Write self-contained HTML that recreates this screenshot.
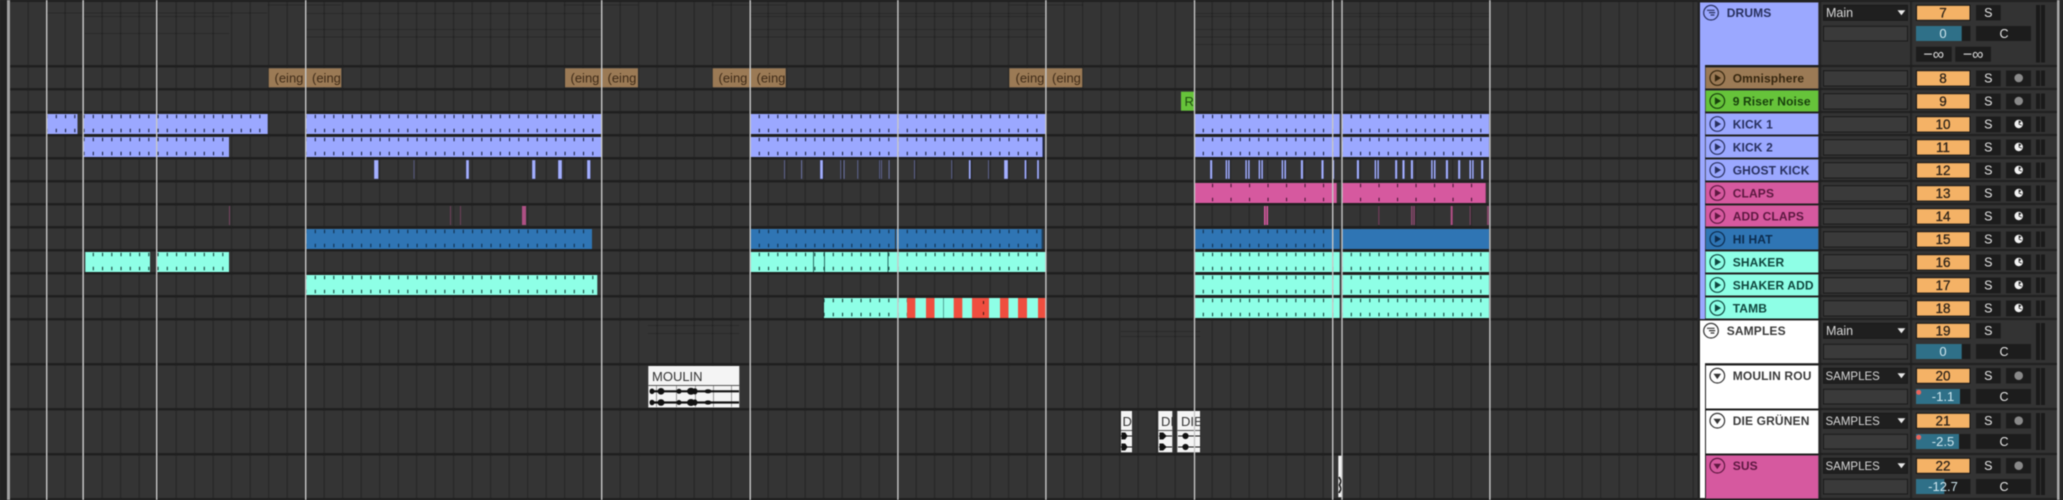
<!DOCTYPE html>
<html><head><meta charset="utf-8"><title>Arrangement</title>
<style>
html,body{margin:0;padding:0;background:#2f2f2f;width:2063px;height:500px;overflow:hidden}
svg{display:block;font-family:"Liberation Sans",sans-serif;filter:blur(.45px)}
.n{font-size:12px;font-weight:700;letter-spacing:.15px}
.c{font-size:11.5px;fill:#d8d8d8}
.o{font-size:13.5px;fill:#2a2118;text-anchor:middle;stroke:#2a2118;stroke-width:.25}
.s{font-size:12.5px;fill:#e4e4e4;text-anchor:middle}
.v{font-size:13px;fill:#cfe6ee;text-anchor:middle}
.cl{font-size:13px;fill:#3f2b18}
</style></head><body>
<svg width="2063" height="500" viewBox="0 0 2063 500" xmlns="http://www.w3.org/2000/svg">
<defs>
<clipPath id="k1"><rect x="47" y="114" width="30.5" height="20"/><rect x="83" y="114" width="184.7" height="20"/><rect x="305.5" y="114" width="296" height="20"/><rect x="750" y="114" width="295.5" height="20"/><rect x="1194" y="114" width="145.7" height="20"/><rect x="1342.5" y="114" width="146.5" height="20"/></clipPath>
<clipPath id="k2"><rect x="83" y="137" width="146" height="20"/><rect x="305.5" y="137" width="296" height="20"/><rect x="750" y="137" width="292.5" height="20"/><rect x="1194" y="137" width="145.7" height="20"/><rect x="1342.5" y="137" width="146.5" height="20"/></clipPath>
<clipPath id="cl"><rect x="1194" y="183" width="142.7" height="20"/><rect x="1342.5" y="183" width="143.2" height="20"/></clipPath>
<clipPath id="hh"><rect x="305.5" y="229" width="286.5" height="20"/><rect x="750" y="229" width="291.7" height="20"/><rect x="1194" y="229" width="145.7" height="20"/></clipPath>
<clipPath id="sh"><rect x="85.3" y="252" width="64.7" height="20"/><rect x="156.7" y="252" width="72.3" height="20"/><rect x="750" y="252" width="295.5" height="20"/><rect x="1194" y="252" width="145.7" height="20"/><rect x="1342.5" y="252" width="146.5" height="20"/></clipPath>
<clipPath id="sa"><rect x="305.5" y="275" width="291.8" height="20"/><rect x="1194" y="275" width="145.7" height="20"/><rect x="1342.5" y="275" width="146.5" height="20"/></clipPath>
<clipPath id="tb"><rect x="824" y="298" width="83" height="20"/><rect x="1194" y="298" width="145.7" height="20"/><rect x="1342.5" y="298" width="146.5" height="20"/></clipPath>
<g id="play" fill="none"><circle r="7.3" stroke="currentColor" stroke-width="1.2"/><path d="M-2.4-3.8 3.8 0-2.4 3.8Z" fill="currentColor" stroke="none"/></g>
<g id="down" fill="none"><circle r="7.3" stroke="currentColor" stroke-width="1.2"/><path d="M-3.8-2 3.8-2 0 3.4Z" fill="currentColor" stroke="none"/></g>
<g id="grp" fill="none" stroke="currentColor" stroke-width="1.2"><circle r="7.3"/><path d="M-4-2.4H3.6M-2-.1H4.2M-.4 2.3H3.4"/></g>
<g id="mon"><circle r="4.2" fill="#f2f2f2"/><path d="M0 0V-3.4A3.4 3.4 0 0 1 2.6-2.2Z" fill="#1d1d1d"/><path d="M0 0 3 1.2" stroke="#1d1d1d" stroke-width=".8"/></g>
<g id="rec"><circle r="4.3" fill="#8a8a8a"/></g>
<g id="trk">
<rect x="1823.5" y="3.7" width="84" height="15.4" fill="#3a3a3a" stroke="#1a1a1a"/>
<rect x="1916.5" y="3.7" width="53.5" height="15.4" fill="#f4b266" stroke="#141414"/>
<rect x="1976" y="3.5" width="24.7" height="15.8" fill="#1c1c1c"/>
<rect x="2006" y="3.5" width="25" height="15.8" fill="#1c1c1c"/>
<rect x="2036" y="3.5" width="4" height="15.5" fill="#1a1a1a"/><rect x="2041" y="3.5" width="4" height="15.5" fill="#1a1a1a"/>
</g>
<g id="bus">
<rect x="1823.5" y="3.3" width="84" height="15" fill="#1f1f1f" stroke="#1a1a1a"/>
<path d="M1897.5 8.2H1905.3L1901.4 13.2Z" fill="#e8e8e8"/>
<rect x="1823.5" y="24.3" width="84" height="14.7" fill="#3a3a3a" stroke="#1a1a1a"/>
<rect x="1916.5" y="3.3" width="53.5" height="15" fill="#f4b266" stroke="#141414"/>
<rect x="1976" y="3" width="24.7" height="15.5" fill="#1c1c1c"/>
<rect x="1916" y="24" width="54.5" height="15" fill="#1c1c1c"/>
<rect x="1976" y="24" width="55" height="15" fill="#1c1c1c"/>
<rect x="2036" y="3" width="4" height="37" fill="#1a1a1a"/><rect x="2041" y="3" width="4" height="37" fill="#1a1a1a"/>
</g>
</defs>

<!-- base -->
<rect width="2063" height="500" fill="#343434"/>
<!-- vertical grid -->
<line x1="9" y1="250" x2="1698" y2="250" stroke="#272727" stroke-width="500" stroke-dasharray="1.2 17.3"/>
<!-- group overview ghosts -->
<g fill="#000" opacity=".2">
<rect x="47" y="12.5" width="220" height="1"/><rect x="83" y="16" width="146" height="1"/><rect x="85" y="33" width="144" height="1"/>
<rect x="268" y="4.5" width="73" height="1"/><rect x="305" y="29" width="296" height="1"/><rect x="305" y="36.5" width="296" height="1"/><rect x="305" y="13" width="296" height="1"/>
<rect x="564" y="4.5" width="74" height="1"/><rect x="712" y="4.5" width="74" height="1"/><rect x="1009" y="4.5" width="74" height="1"/>
<rect x="750" y="13" width="296" height="1"/><rect x="750" y="16" width="296" height="1"/><rect x="750" y="29" width="296" height="1"/><rect x="750" y="36.5" width="296" height="1"/>
<rect x="1194" y="13" width="295" height="1"/><rect x="1194" y="16" width="295" height="1"/><rect x="1194" y="29" width="295" height="1"/><rect x="1194" y="36.5" width="295" height="1"/><rect x="1194" y="44" width="295" height="1"/>
<rect x="648" y="325" width="91" height="1"/><rect x="648" y="333" width="91" height="1"/><rect x="1121" y="331" width="79" height="1"/><rect x="1121" y="336" width="79" height="1"/>
</g>
<!-- row separators -->
<g fill="#1f1f1f">
<rect x="10" y="0" width="1688" height="2"/><rect x="10" y="65" width="1688" height="2.5"/><rect x="10" y="88" width="1688" height="2.5"/><rect x="10" y="111" width="1688" height="2.5"/><rect x="10" y="134" width="1688" height="2.5"/><rect x="10" y="157" width="1688" height="2.5"/><rect x="10" y="180" width="1688" height="2.5"/><rect x="10" y="203" width="1688" height="2.5"/><rect x="10" y="226" width="1688" height="2.5"/><rect x="10" y="249" width="1688" height="2.5"/><rect x="10" y="272" width="1688" height="2.5"/><rect x="10" y="295" width="1688" height="2.5"/><rect x="10" y="318" width="1688" height="2.5"/><rect x="10" y="363" width="1688" height="2.5"/><rect x="10" y="408" width="1688" height="2.5"/><rect x="10" y="453" width="1688" height="2.5"/><rect x="10" y="498" width="1688" height="2"/>
</g>
<!-- left edge -->
<rect x="0" y="0" width="7" height="500" fill="#222"/>
<rect x="7" y="0" width="3" height="500" fill="#a0a0a0"/>

<!-- brown clips -->
<g fill="#9b7a55">
<rect x="268.7" y="68.3" width="72.6" height="19"/><rect x="565" y="68.3" width="73" height="19"/><rect x="712.7" y="68.3" width="73" height="19"/><rect x="1009.3" y="68.3" width="73" height="19"/>
</g>
<text class="cl" x="274.5" y="82.5">(eing</text><text class="cl" x="312" y="82.5">(eing</text>
<text class="cl" x="570.5" y="82.5">(eing</text><text class="cl" x="607.5" y="82.5">(eing</text>
<text class="cl" x="718.5" y="82.5">(eing</text><text class="cl" x="756.5" y="82.5">(eing</text>
<text class="cl" x="1015.5" y="82.5">(eing</text><text class="cl" x="1052" y="82.5">(eing</text>
<!-- riser -->
<rect x="1181" y="91.7" width="13" height="19" fill="#66c33a"/>
<text x="1184.5" y="106" font-size="13" fill="#1f4d10">Ri</text>

<!-- kick 1 / kick 2 -->
<g fill="#9ba8ff">
<rect x="47" y="114" width="30.5" height="20"/><rect x="83" y="114" width="184.7" height="20"/><rect x="305.5" y="114" width="296" height="20"/><rect x="750" y="114" width="295.5" height="20"/><rect x="1194" y="114" width="145.7" height="20"/><rect x="1342.5" y="114" width="146.5" height="20"/>
<rect x="83" y="137" width="146" height="20"/><rect x="305.5" y="137" width="296" height="20"/><rect x="750" y="137" width="292.5" height="20"/><rect x="1194" y="137" width="145.7" height="20"/><rect x="1342.5" y="137" width="146.5" height="20"/>
</g>
<!-- ghost kick -->
<g fill="#a4b0ff" stroke="#1f2440" stroke-width=".3">
<rect x="374" y="160" width="4.5" height="19"/><rect x="413.5" y="160" width="1" height="19" opacity=".5"/><rect x="466" y="160" width="3" height="19"/><rect x="532" y="160" width="3.5" height="19"/><rect x="558" y="160" width="4" height="19"/><rect x="587" y="160" width="3.5" height="19"/>
<rect x="784" y="160" width="1" height="19" opacity=".6"/><rect x="801" y="160" width="1.2" height="19" opacity=".6"/><rect x="820" y="160" width="3" height="19"/><rect x="840.2" y="160" width="1" height="19" opacity=".6"/><rect x="843.5" y="160" width="1.2" height="19" opacity=".6"/><rect x="857.2" y="160" width="1" height="19" opacity=".6"/><rect x="879" y="160" width="1" height="19" opacity=".6"/><rect x="881" y="160" width="1" height="19" opacity=".6"/><rect x="888.5" y="160" width="1.2" height="19" opacity=".6"/><rect x="914" y="160" width="1" height="19" opacity=".6"/><rect x="951.2" y="160" width="1" height="19" opacity=".6"/><rect x="968.7" y="160" width="2" height="19"/><rect x="988" y="160" width="1" height="19" opacity=".6"/><rect x="1004" y="160" width="4" height="19"/><rect x="1024.5" y="160" width="2" height="19"/><rect x="1037" y="160" width="2" height="19"/>
<rect x="1210" y="160" width="2.4" height="19"/><rect x="1225.5" y="160" width="1.8" height="19"/><rect x="1228" y="160" width="1.8" height="19"/><rect x="1245.2" y="160" width="1.8" height="19"/><rect x="1248" y="160" width="1.8" height="19"/><rect x="1258.5" y="160" width="1.8" height="19"/><rect x="1261.2" y="160" width="1.8" height="19"/><rect x="1281.5" y="160" width="1.8" height="19"/><rect x="1284.3" y="160" width="1.8" height="19"/><rect x="1300.7" y="160" width="2.4" height="19"/><rect x="1321.3" y="160" width="2.4" height="19"/><rect x="1332.5" y="160" width="1.8" height="19"/>
<rect x="1356.7" y="160" width="2.4" height="19"/><rect x="1374.5" y="160" width="1.8" height="19"/><rect x="1377.2" y="160" width="1.8" height="19"/><rect x="1395" y="160" width="2.4" height="19"/><rect x="1402.3" y="160" width="2.4" height="19"/><rect x="1410.7" y="160" width="2.4" height="19"/><rect x="1431" y="160" width="1.8" height="19"/><rect x="1433.8" y="160" width="1.8" height="19"/><rect x="1445.7" y="160" width="2.4" height="19"/><rect x="1458" y="160" width="2.4" height="19"/><rect x="1469.3" y="160" width="1.8" height="19"/><rect x="1472" y="160" width="1.8" height="19"/><rect x="1481" y="160" width="2.4" height="19"/>
</g>
<!-- claps -->
<g fill="#d6599f"><rect x="1194" y="183" width="142.7" height="20"/><rect x="1342.5" y="183" width="143.2" height="20"/></g>
<!-- add claps -->
<g fill="#d6599f">
<rect x="229" y="206" width="1" height="19" opacity=".4"/><rect x="450" y="206" width="1" height="19" opacity=".35"/><rect x="460" y="206" width="1" height="19" opacity=".35"/><rect x="522" y="206" width="4" height="19" opacity=".75"/>
<rect x="1264" y="206" width="1.7" height="19"/><rect x="1266.4" y="206" width="1.7" height="19"/><rect x="1378.3" y="206" width="1" height="19" opacity=".5"/><rect x="1411" y="206" width="1.6" height="19" opacity=".5"/><rect x="1413.3" y="206" width="1.6" height="19" opacity=".5"/><rect x="1450.7" y="206" width="2" height="19" opacity=".8"/><rect x="1469.7" y="206" width="1" height="19" opacity=".5"/><rect x="1487" y="206" width="2" height="19" opacity=".5"/>
</g>
<!-- hi hat -->
<g fill="#2f75b4"><rect x="305.5" y="229" width="286.5" height="20"/><rect x="750" y="229" width="145" height="20"/><rect x="896" y="229" width="145.7" height="20"/><rect x="1194" y="229" width="145.7" height="20"/><rect x="1342.5" y="229" width="146.5" height="20"/></g>
<!-- shaker / add / tamb -->
<g fill="#8effe6">
<rect x="85.3" y="252" width="64.7" height="20"/><rect x="156.7" y="252" width="72.3" height="20"/><rect x="750" y="252" width="295.5" height="20"/><rect x="1194" y="252" width="145.7" height="20"/><rect x="1342.5" y="252" width="146.5" height="20"/>
<rect x="305.5" y="275" width="291.8" height="20"/><rect x="1194" y="275" width="145.7" height="20"/><rect x="1342.5" y="275" width="146.5" height="20"/>
<rect x="824" y="298" width="221.5" height="20"/><rect x="1194" y="298" width="145.7" height="20"/><rect x="1342.5" y="298" width="146.5" height="20"/>
</g>
<g fill="#ef4e3f"><rect x="907" y="298" width="8.3" height="20"/><rect x="926" y="298" width="8.5" height="20"/><rect x="953.7" y="298" width="8.6" height="20"/><rect x="972" y="298" width="17" height="20"/><rect x="1000" y="298" width="8.5" height="20"/><rect x="1018" y="298" width="9" height="20"/><rect x="1038" y="298" width="7.5" height="20"/></g>
<g fill="#2b6b62"><rect x="813" y="252" width="1" height="20"/><rect x="824" y="252" width="1" height="20"/><rect x="887.5" y="252" width="1" height="20"/><rect x="943" y="298" width="1" height="20" opacity=".6"/></g>

<!-- ticks -->
<g fill="none" stroke-width="3.5" stroke-dasharray="1.1 8.15">
<g stroke="#1c2340" clip-path="url(#k1)"><line x1="9.5" y1="116.5" x2="1680" y2="116.5"/><line x1="9.5" y1="130.5" x2="1680" y2="130.5"/></g>
<g stroke="#1c2340" clip-path="url(#k2)"><line x1="9.5" y1="139.5" x2="1680" y2="139.5"/><line x1="9.5" y1="153.5" x2="1680" y2="153.5"/></g>
<g stroke="#12304e" clip-path="url(#hh)"><line x1="9.5" y1="231.5" x2="1680" y2="231.5"/><line x1="9.5" y1="245.5" x2="1680" y2="245.5"/></g>
<g stroke="#17433c" clip-path="url(#sh)"><line x1="9.5" y1="254.5" x2="1680" y2="254.5"/><line x1="9.5" y1="268.5" x2="1680" y2="268.5"/></g>
<g stroke="#17433c" clip-path="url(#sa)"><line x1="9.5" y1="277.5" x2="1680" y2="277.5"/><line x1="9.5" y1="291.5" x2="1680" y2="291.5"/></g>
<g stroke="#17433c" clip-path="url(#tb)"><line x1="9.5" y1="300.5" x2="1680" y2="300.5"/><line x1="9.5" y1="314.5" x2="1680" y2="314.5"/></g>
<g stroke="#4a1836" stroke-dasharray="1.1 17.4" clip-path="url(#cl)"><line x1="9.5" y1="185.5" x2="1680" y2="185.5"/><line x1="9.5" y1="199.5" x2="1680" y2="199.5"/></g>
</g>
<rect x="983" y="301" width="1" height="3" fill="#3a1510"/><rect x="983" y="312" width="1" height="3" fill="#3a1510"/>
<rect x="1041.7" y="229" width="1.5" height="20" fill="#1c3d5c"/>
<rect x="1042.5" y="137" width="1.5" height="20" fill="#1c2340"/>

<!-- MOULIN clip -->
<rect x="648.3" y="366" width="91" height="41.5" fill="#f4f4f4"/>
<rect x="648.3" y="385" width="91" height="1" fill="#555"/>
<g fill="#9a9a9a"><rect x="656" y="386" width="1" height="21"/><rect x="676" y="386" width="1" height="21"/><rect x="695" y="386" width="1" height="21"/><rect x="713" y="386" width="1" height="21"/><rect x="731" y="386" width="1" height="21"/></g>
<text x="652" y="381" font-size="13" fill="#333">MOULIN</text>
<g stroke="#111" fill="#111">
<line x1="650" y1="391.3" x2="739" y2="391.3" stroke-width="2.2"/><line x1="650" y1="402.5" x2="739" y2="402.5" stroke-width="2.2"/>
<ellipse cx="652" cy="391.3" rx="2" ry="2.3"/><ellipse cx="661" cy="391.3" rx="3" ry="2.8"/><ellipse cx="679" cy="391.3" rx="2" ry="2"/><ellipse cx="691" cy="391.3" rx="3.5" ry="3"/><ellipse cx="695" cy="391.3" rx="2" ry="2.6"/><ellipse cx="708" cy="391.3" rx="3" ry="1.6"/>
<ellipse cx="652" cy="402.5" rx="2" ry="2.3"/><ellipse cx="661" cy="402.5" rx="3" ry="2.8"/><ellipse cx="679" cy="402.5" rx="2" ry="2"/><ellipse cx="691" cy="402.5" rx="3.5" ry="3"/><ellipse cx="695" cy="402.5" rx="2" ry="2.6"/><ellipse cx="708" cy="402.5" rx="3" ry="1.6"/>
</g>

<!-- DIE clips -->
<g fill="#f4f4f4"><rect x="1121" y="411" width="11" height="41.3"/><rect x="1158.3" y="411" width="14" height="41.3"/><rect x="1177.3" y="411" width="22.7" height="41.3"/></g>
<g fill="#555"><rect x="1121" y="430" width="11" height="1"/><rect x="1158.3" y="430" width="14" height="1"/><rect x="1177.3" y="430" width="22.7" height="1"/></g>
<text x="1122.5" y="426" font-size="13" fill="#333">D</text>
<text x="1161" y="426" font-size="13" fill="#333">DI</text>
<text x="1181" y="426" font-size="13" fill="#333">DIE</text>
<g stroke="#111" fill="#111" stroke-width="1">
<line x1="1121" y1="436" x2="1132" y2="436"/><line x1="1121" y1="447" x2="1132" y2="447"/><path d="M1122 433H1125L1127 436 1125 439H1122Z"/><path d="M1122 444H1125L1127 447 1125 450H1122Z"/>
<line x1="1159" y1="436" x2="1172" y2="436"/><line x1="1159" y1="447" x2="1172" y2="447"/><path d="M1160 433H1163L1166 436 1163 439H1160Z"/><path d="M1160 444H1163L1166 447 1163 450H1160Z"/>
<line x1="1178" y1="436" x2="1200" y2="436"/><line x1="1178" y1="447" x2="1200" y2="447"/><circle cx="1185.5" cy="436" r="2.6"/><circle cx="1185.5" cy="447" r="2.6"/>
</g>
<!-- SUS clip -->
<rect x="1338.3" y="455.7" width="3.7" height="41.5" fill="#f4f4f4"/>
<path d="M1339 477 1341 481 1339.5 485 1341 489 1339 493" fill="none" stroke="#111" stroke-width="1.6"/>

<!-- locators -->
<g fill="#c8c8c8">
<rect x="46" y="0" width="1.4" height="500"/><rect x="82.4" y="0" width="1.5" height="500"/><rect x="156" y="0" width="1.4" height="500"/><rect x="305" y="0" width="1.4" height="500"/><rect x="601" y="0" width="1.4" height="500"/><rect x="749.5" y="0" width="1.4" height="500"/><rect x="897.2" y="0" width="1.4" height="500"/><rect x="1045.2" y="0" width="1.4" height="500"/><rect x="1193.8" y="0" width="1.4" height="500"/><rect x="1332" y="0" width="1.4" height="500"/><rect x="1341.3" y="0" width="1.4" height="500"/><rect x="1489.2" y="0" width="1.4" height="500"/>
</g>

<!-- PANEL -->
<rect x="1698" y="0" width="365" height="500" fill="#333"/>
<rect x="1697.5" y="0" width="2.5" height="500" fill="#232323"/>
<rect x="1819" y="0" width="2.2" height="500" fill="#232323"/>
<rect x="1910" y="0" width="2.2" height="500" fill="#232323"/>
<g fill="#1f1f1f">
<rect x="1700" y="0" width="357" height="2"/><rect x="1700" y="65" width="357" height="2"/><rect x="1700" y="88" width="357" height="2"/><rect x="1700" y="111" width="357" height="2"/><rect x="1700" y="134" width="357" height="2"/><rect x="1700" y="157" width="357" height="2"/><rect x="1700" y="180" width="357" height="2"/><rect x="1700" y="203" width="357" height="2"/><rect x="1700" y="226" width="357" height="2"/><rect x="1700" y="249" width="357" height="2"/><rect x="1700" y="272" width="357" height="2"/><rect x="1700" y="295" width="357" height="2"/><rect x="1700" y="318" width="357" height="2"/><rect x="1700" y="363" width="357" height="2"/><rect x="1700" y="408" width="357" height="2"/><rect x="1700" y="453" width="357" height="2"/><rect x="1700" y="498" width="357" height="2"/>
</g>
<rect x="2057" y="0" width="2.5" height="500" fill="#a8a8a8"/>
<rect x="2059.5" y="0" width="3.5" height="500" fill="#2a2a2a"/>

<!-- name column -->
<rect x="1700" y="2.5" width="118.3" height="62.5" fill="#9ba8ff"/>
<rect x="1700" y="65" width="5" height="254" fill="#9ba8ff"/>
<rect x="1700" y="320.5" width="118.3" height="42.7" fill="#fff"/>
<rect x="1700" y="363" width="5" height="135" fill="#fff"/>
<g>
<rect x="1705.7" y="67.5" width="112.6" height="21" fill="#9b7a55"/>
<rect x="1705.7" y="90.5" width="112.6" height="21" fill="#66c33a"/>
<rect x="1705.7" y="113.5" width="112.6" height="21" fill="#9ba8ff"/>
<rect x="1705.7" y="136.5" width="112.6" height="21" fill="#9ba8ff"/>
<rect x="1705.7" y="159.5" width="112.6" height="21" fill="#9ba8ff"/>
<rect x="1705.7" y="182.5" width="112.6" height="21" fill="#d6599f"/>
<rect x="1705.7" y="205.5" width="112.6" height="21" fill="#d6599f"/>
<rect x="1705.7" y="228.5" width="112.6" height="21" fill="#2f75b4"/>
<rect x="1705.7" y="251.5" width="112.6" height="21" fill="#8effe6"/>
<rect x="1705.7" y="274.5" width="112.6" height="21" fill="#8effe6"/>
<rect x="1705.7" y="297.5" width="112.6" height="21" fill="#8effe6"/>
<rect x="1705.7" y="365.5" width="112.6" height="43" fill="#fff"/>
<rect x="1705.7" y="410.5" width="112.6" height="43" fill="#fff"/>
<rect x="1705.7" y="455.5" width="112.6" height="43" fill="#d6599f"/>
</g>
<g fill="#1c1c1c"><rect x="1705" y="364" width="113.5" height="1.5"/><rect x="1705" y="408.7" width="113.5" height="1.5"/><rect x="1705" y="453.7" width="113.5" height="1.5"/><rect x="1705" y="365" width="1" height="133"/></g>

<!-- icons -->
<use href="#grp" x="1711" y="12.7" style="color:#28305e"/>
<use href="#play" x="1717.3" y="78" style="color:#35260f"/>
<use href="#play" x="1717.3" y="101" style="color:#173f0c"/>
<use href="#play" x="1717.3" y="124" style="color:#28305e"/>
<use href="#play" x="1717.3" y="147" style="color:#28305e"/>
<use href="#play" x="1717.3" y="170" style="color:#28305e"/>
<use href="#play" x="1717.3" y="193" style="color:#5c1840"/>
<use href="#play" x="1717.3" y="216" style="color:#5c1840"/>
<use href="#play" x="1717.3" y="239" style="color:#0c2c4e"/>
<use href="#play" x="1717.3" y="262" style="color:#10463e"/>
<use href="#play" x="1717.3" y="285" style="color:#10463e"/>
<use href="#play" x="1717.3" y="308" style="color:#10463e"/>
<use href="#grp" x="1711" y="330.7" style="color:#333"/>
<use href="#down" x="1717.3" y="375.7" style="color:#333"/>
<use href="#down" x="1717.3" y="420.7" style="color:#333"/>
<use href="#down" x="1717.3" y="465.7" style="color:#5c1840"/>

<!-- names -->
<text class="n" x="1726.7" y="17" fill="#28305e">DRUMS</text>
<text class="n" x="1732.7" y="82.3" fill="#35260f">Omnisphere</text>
<text class="n" x="1732.7" y="105.3" fill="#173f0c">9 Riser Noise</text>
<text class="n" x="1732.7" y="128.3" fill="#28305e">KICK 1</text>
<text class="n" x="1732.7" y="151.3" fill="#28305e">KICK 2</text>
<text class="n" x="1732.7" y="174.3" fill="#28305e">GHOST KICK</text>
<text class="n" x="1732.7" y="197.3" fill="#5c1840">CLAPS</text>
<text class="n" x="1732.7" y="220.3" fill="#5c1840">ADD CLAPS</text>
<text class="n" x="1732.7" y="243.3" fill="#0c2c4e">HI HAT</text>
<text class="n" x="1732.7" y="266.3" fill="#10463e">SHAKER</text>
<text class="n" x="1732.7" y="289.3" fill="#10463e">SHAKER ADD</text>
<text class="n" x="1732.7" y="312.3" fill="#10463e">TAMB</text>
<text class="n" x="1726.7" y="335" fill="#3a3a3a">SAMPLES</text>
<text class="n" x="1732.7" y="380" fill="#3a3a3a">MOULIN ROU</text>
<text class="n" x="1732.7" y="425" fill="#3a3a3a">DIE GRÜNEN</text>
<text class="n" x="1732.7" y="470" fill="#5c1840">SUS</text>

<!-- track controls -->
<use href="#trk" y="67"/><use href="#trk" y="90"/><use href="#trk" y="113"/><use href="#trk" y="136"/><use href="#trk" y="159"/><use href="#trk" y="182"/><use href="#trk" y="205"/><use href="#trk" y="228"/><use href="#trk" y="251"/><use href="#trk" y="274"/><use href="#trk" y="297"/>
<use href="#bus" y="2"/><use href="#bus" y="320"/><use href="#bus" y="365"/><use href="#bus" y="410"/><use href="#bus" y="455"/>
<rect x="2036" y="5" width="4" height="57.5" fill="#1a1a1a"/><rect x="2041" y="5" width="4" height="57.5" fill="#1a1a1a"/>
<!-- drums master fill -->
<rect x="1916" y="26" width="45.7" height="15" fill="#2f7088"/>
<rect x="1916" y="344" width="45.7" height="15" fill="#2f7088"/>
<rect x="1916" y="389" width="44" height="15" fill="#2f7088"/>
<rect x="1916" y="434" width="43" height="15" fill="#2f7088"/>
<rect x="1916" y="479" width="28.3" height="15" fill="#2f7088"/>
<circle cx="1918.7" cy="392.3" r="2.5" fill="#e8645c"/><circle cx="1918.7" cy="437.3" r="2.5" fill="#e8645c"/>
<g fill="#1c1c1c"><rect x="1916" y="46.7" width="35.7" height="15"/><rect x="1955.3" y="46.7" width="35.7" height="15"/></g>
<text x="1933.8" y="59.5" font-size="16" fill="#d8d8d8" text-anchor="middle">−∞</text>
<text x="1973.2" y="59.5" font-size="16" fill="#d8d8d8" text-anchor="middle">−∞</text>

<!-- routing text -->
<text x="1826" y="17" font-size="12.5" fill="#d8d8d8">Main</text>
<text x="1826" y="335" font-size="12.5" fill="#d8d8d8">Main</text>
<text class="c" x="1825.5" y="380">SAMPLES</text>
<text class="c" x="1825.5" y="425">SAMPLES</text>
<text class="c" x="1825.5" y="470">SAMPLES</text>

<!-- numbers -->
<text class="o" x="1943" y="17.5">7</text><text class="o" x="1943" y="83">8</text><text class="o" x="1943" y="106">9</text><text class="o" x="1943" y="129">10</text><text class="o" x="1943" y="152">11</text><text class="o" x="1943" y="175">12</text><text class="o" x="1943" y="198">13</text><text class="o" x="1943" y="221">14</text><text class="o" x="1943" y="244">15</text><text class="o" x="1943" y="267">16</text><text class="o" x="1943" y="290">17</text><text class="o" x="1943" y="313">18</text><text class="o" x="1943" y="335.5">19</text><text class="o" x="1943" y="380.5">20</text><text class="o" x="1943" y="425.5">21</text><text class="o" x="1943" y="470.5">22</text>

<!-- S -->
<text class="s" x="1988.3" y="17">S</text><text class="s" x="1988.3" y="82.5">S</text><text class="s" x="1988.3" y="105.5">S</text><text class="s" x="1988.3" y="128.5">S</text><text class="s" x="1988.3" y="151.5">S</text><text class="s" x="1988.3" y="174.5">S</text><text class="s" x="1988.3" y="197.5">S</text><text class="s" x="1988.3" y="220.5">S</text><text class="s" x="1988.3" y="243.5">S</text><text class="s" x="1988.3" y="266.5">S</text><text class="s" x="1988.3" y="289.5">S</text><text class="s" x="1988.3" y="312.5">S</text><text class="s" x="1988.3" y="335">S</text><text class="s" x="1988.3" y="380">S</text><text class="s" x="1988.3" y="425">S</text><text class="s" x="1988.3" y="470">S</text>

<!-- C and volumes -->
<text class="s" x="2004" y="38">C</text><text class="s" x="2004" y="356">C</text><text class="s" x="2004" y="401">C</text><text class="s" x="2004" y="446">C</text><text class="s" x="2004" y="491">C</text>
<text class="v" x="1943" y="38">0</text><text class="v" x="1943" y="356">0</text><text class="v" x="1943" y="401">-1.1</text><text class="v" x="1943" y="446">-2.5</text><text class="v" x="1943" y="491">-12.7</text>

<!-- record / monitor -->
<use href="#rec" x="2018.7" y="78"/><use href="#rec" x="2018.7" y="101"/>
<use href="#mon" x="2018.7" y="124"/><use href="#mon" x="2018.7" y="147"/><use href="#mon" x="2018.7" y="170"/><use href="#mon" x="2018.7" y="193"/><use href="#mon" x="2018.7" y="216"/><use href="#mon" x="2018.7" y="239"/><use href="#mon" x="2018.7" y="262"/><use href="#mon" x="2018.7" y="285"/><use href="#mon" x="2018.7" y="308"/>
<rect x="2006" y="368" width="25" height="15.5" fill="#1c1c1c"/><rect x="2006" y="413" width="25" height="15.5" fill="#1c1c1c"/><rect x="2006" y="458" width="25" height="15.5" fill="#1c1c1c"/>
<use href="#rec" x="2018.7" y="375.7"/><use href="#rec" x="2018.7" y="420.7"/><use href="#rec" x="2018.7" y="465.7"/>
</svg>
</body></html>
